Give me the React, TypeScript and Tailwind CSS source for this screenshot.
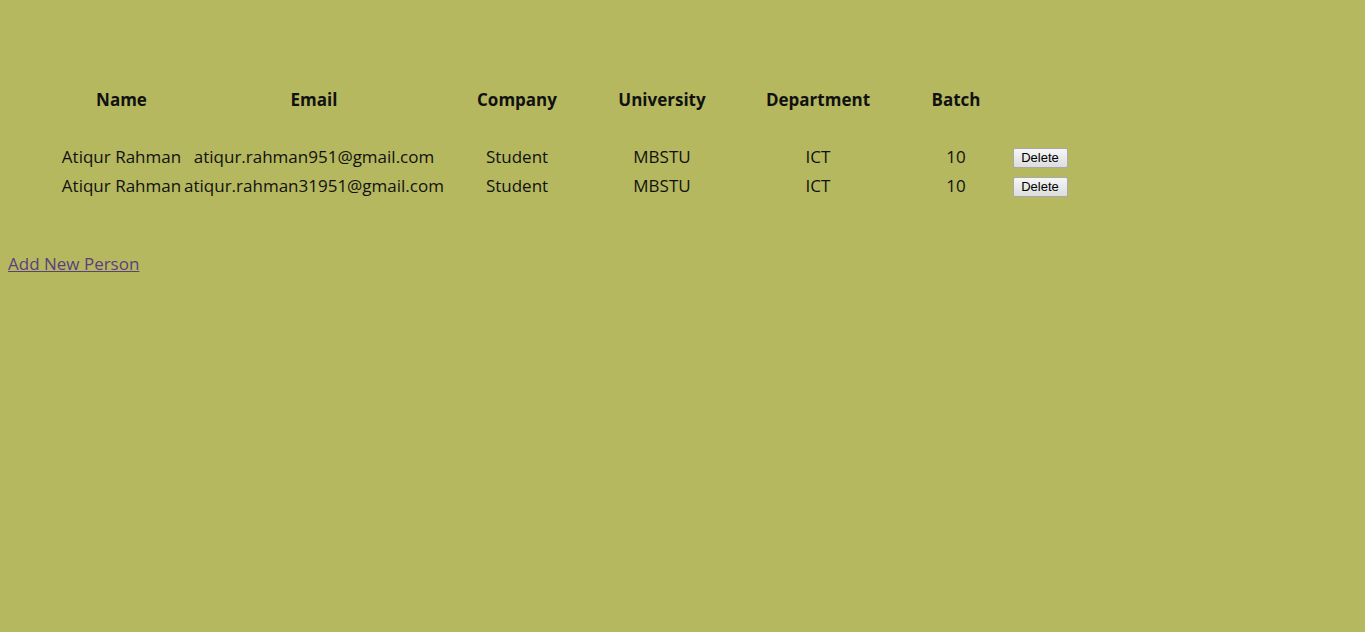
const people = [
  { name: "Atiqur Rahman", email: "atiqur.rahman951@gmail.com", company: "Student", university: "MBSTU", department: "ICT", batch: "10" },
  { name: "Atiqur Rahman", email: "atiqur.rahman31951@gmail.com", company: "Student", university: "MBSTU", department: "ICT", batch: "10" },
];

const cols = "grid grid-cols-[123px_262px_144px_146px_166px_110px_58px] text-center";

export default function App() {
  return (
    <div className="min-h-screen bg-[#b5b85e] text-[17px] text-[#111] pt-[85px] pl-[60px]" style={{ fontFamily: '"Open Sans", sans-serif' }}>
      {/* Header */}
      <div className={`${cols} font-bold leading-[29px]`}>
        <div>Name</div>
        <div>Email</div>
        <div>Company</div>
        <div>University</div>
        <div>Department</div>
        <div>Batch</div>
        <div />
      </div>

      {/* Rows */}
      <div className="mt-[28px]">
        {people.map((p, i) => (
          <div key={i} className={`${cols} leading-[29px] items-center`}>
            <div className="whitespace-nowrap">{p.name}</div>
            <div className="whitespace-nowrap">{p.email}</div>
            <div>{p.company}</div>
            <div>{p.university}</div>
            <div>{p.department}</div>
            <div>{p.batch}</div>
            <div className="flex justify-center">
              <button className="mt-[3px] h-[20px] w-[55px] border border-[#a9a9a9] rounded-[2px] bg-gradient-to-b from-[#f6f6f6] to-[#dddddd] text-[13px] leading-[18px] text-black" style={{ fontFamily: '"Liberation Sans", Arial, sans-serif' }}>
                Delete
              </button>
            </div>
          </div>
        ))}
      </div>

      <div className="-ml-[52px] mt-[51px] leading-[25px]">
        <a href="#" className="underline text-[#5b3f7f]">Add New Person</a>
      </div>
    </div>
  );
}
